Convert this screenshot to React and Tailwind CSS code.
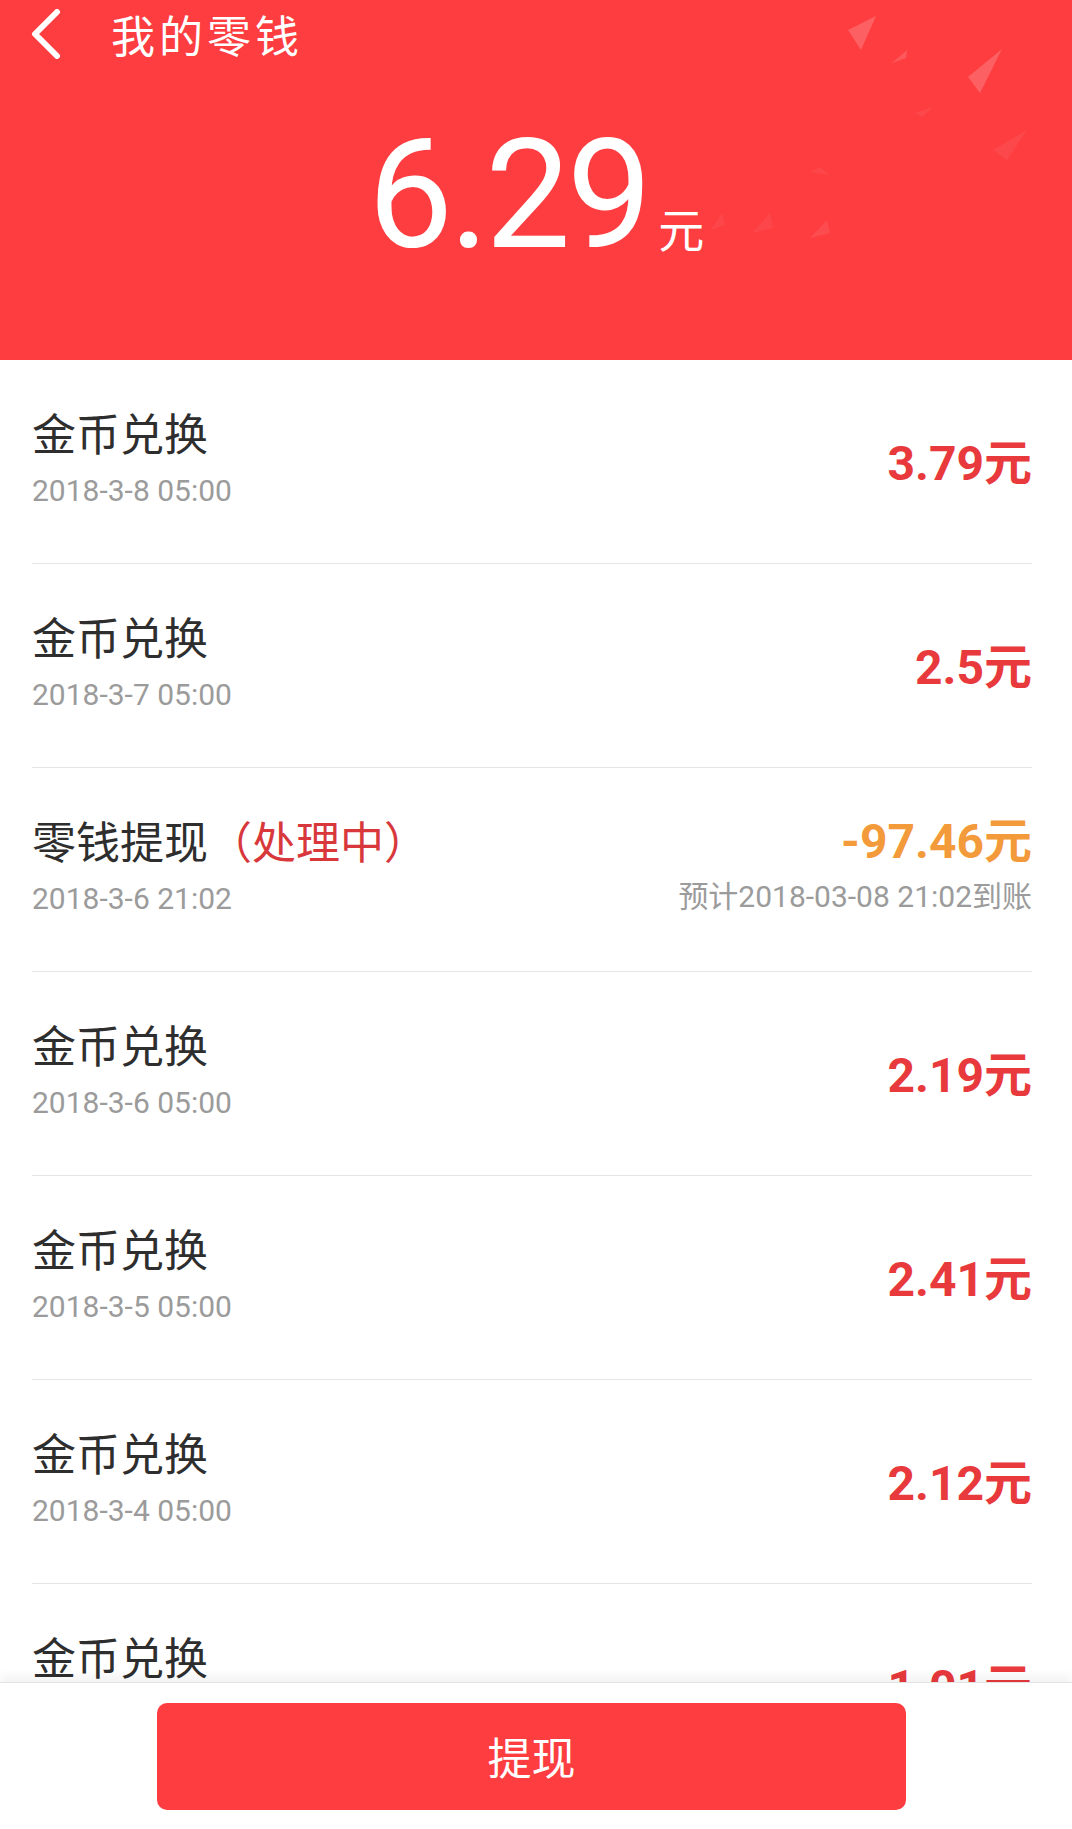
import React from "react";

const rows = [
  { title: "金币兑换", date: "2018-3-8 05:00", amount: "3.79元" },
  { title: "金币兑换", date: "2018-3-7 05:00", amount: "2.5元" },
  {
    title: "零钱提现",
    status: "（处理中）",
    date: "2018-3-6 21:02",
    amount: "-97.46元",
    note: "预计2018-03-08 21:02到账",
    pending: true,
  },
  { title: "金币兑换", date: "2018-3-6 05:00", amount: "2.19元" },
  { title: "金币兑换", date: "2018-3-5 05:00", amount: "2.41元" },
  { title: "金币兑换", date: "2018-3-4 05:00", amount: "2.12元" },
  { title: "金币兑换", date: "2018-3-3 05:00", amount: "1.01元" },
];

function Shards() {
  const tris = [
    ["848,30 876,16 861,50", 0.18],
    ["892,63 907,50 906,58", 0.15],
    ["968,77 1002,49 980,93", 0.18],
    ["915,113 933,107 922,117", 0.06],
    ["993,150 1027,130 1007,160", 0.06],
    ["810,172 830,175 820,167", 0.05],
    ["810,238 830,233 827,220", 0.08],
    ["711,230 722,213 725,225", 0.05],
    ["752,233 770,213 773,228", 0.05],
  ];
  return (
    <svg
      className="absolute inset-0 pointer-events-none"
      width="1072"
      height="360"
      viewBox="0 0 1072 360"
    >
      {tris.map(([p, o], i) => (
        <polygon key={i} points={p} fill="#ffffff" fillOpacity={o} />
      ))}
    </svg>
  );
}

function Row({ r }) {
  return (
    <div className="ml-[32px] mr-[40px] h-[204px] flex justify-between border-b border-[#e6e6e6]">
      <div className="pt-[46px] flex flex-col">
        <div className="font-['Noto_Sans_CJK_SC',sans-serif] text-[44px] leading-[52px] text-[#2e2e2e] whitespace-nowrap">
          {r.title}
          {r.status && <span className="text-[#d8383b]">{r.status}</span>}
        </div>
        <div className="mt-[15px] font-['Roboto','Noto_Sans_CJK_SC',sans-serif] text-[30px] leading-[36px] text-[#9b9b9b]">
          {r.date}
        </div>
      </div>
      {r.pending ? (
        <div className="pt-[46px] flex flex-col items-end">
          <div className="font-['Roboto','Noto_Sans_CJK_SC',sans-serif] font-bold text-[48px] leading-[56px] text-[#f39a3b]">
            {r.amount}
          </div>
          <div className="mt-[9px] font-['Roboto','Noto_Sans_CJK_SC',sans-serif] text-[30px] leading-[36px] text-[#9b9b9b] whitespace-nowrap">
            {r.note}
          </div>
        </div>
      ) : (
        <div className="self-center mt-[4px] font-['Roboto','Noto_Sans_CJK_SC',sans-serif] font-bold text-[48px] leading-[56px] text-[#e8393c]">
          {r.amount}
        </div>
      )}
    </div>
  );
}

export default function App() {
  return (
    <div className="w-[1072px] h-[1829px] flex flex-col overflow-hidden bg-white">
      <div className="relative h-[360px] shrink-0 bg-[#fd3d40] text-white">
        <Shards />
        <div className="relative h-[68px] flex items-center">
          <svg
            className="ml-[30px]"
            width="32"
            height="50"
            viewBox="0 0 32 50"
            fill="none"
          >
            <path
              d="M27 3 L5 25 L27 47"
              stroke="#ffffff"
              strokeWidth="6"
              strokeLinecap="round"
              strokeLinejoin="round"
            />
          </svg>
          <div className="ml-[49px] font-['Noto_Sans_CJK_SC',sans-serif] text-[44px] leading-none tracking-[4px]">
            我的零钱
          </div>
        </div>
        <div className="relative mt-[51px] flex items-baseline justify-center">
          <span className="font-['Roboto',sans-serif] text-[152px] leading-none tracking-[-4px]">
            6.29
          </span>
          <span className="ml-[10px] font-['Noto_Sans_CJK_SC',sans-serif] text-[46px] leading-none">
            元
          </span>
        </div>
      </div>
      <div className="flex-1 min-h-0 overflow-hidden">
        {rows.map((r, i) => (
          <Row key={i} r={r} />
        ))}
      </div>
      <div className="relative z-10 h-[147px] shrink-0 bg-white border-t border-[#e3e3e3] shadow-[0_-6px_10px_rgba(0,0,0,0.05)] flex items-center pl-[157px]">
        <div className="w-[749px] h-[107px] rounded-[10px] bg-[#fd3d40] flex items-center justify-center font-['Noto_Sans_CJK_SC',sans-serif] text-[44px] text-white">
          提现
        </div>
      </div>
    </div>
  );
}
